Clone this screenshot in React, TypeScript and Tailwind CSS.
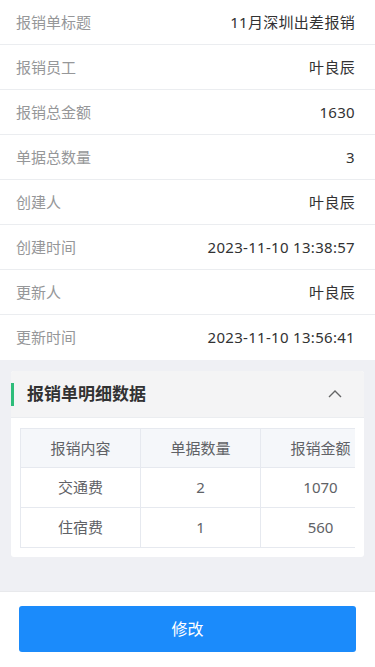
import React from "react";

const rows: [string, string][] = [
  ["报销单标题", "11月深圳出差报销"],
  ["报销员工", "叶良辰"],
  ["报销总金额", "1630"],
  ["单据总数量", "3"],
  ["创建人", "叶良辰"],
  ["创建时间", "2023-11-10 13:38:57"],
  ["更新人", "叶良辰"],
  ["更新时间", "2023-11-10 13:56:41"],
];

const items = [
  ["交通费", "2", "1070"],
  ["住宿费", "1", "560"],
];

export default function App() {
  return (
    <div
      className="w-[375px] h-[667px] flex flex-col bg-[#eff0f4] overflow-hidden"
      style={{ fontFamily: '"Noto Sans", "Noto Sans CJK SC", sans-serif' }}
    >
      <div className="flex-1 overflow-hidden">
        <div className="bg-white">
          {rows.map(([k, v], i) => (
            <div
              key={k}
              className={`h-[45px] flex items-center justify-between pl-4 pr-5 text-[15px] ${
                i < rows.length - 1 ? "border-b border-[#ebedf0]" : ""
              }`}
            >
              <span className="text-[#969799]">{k}</span>
              <span className="text-[#323233] tracking-[0.3px]">{v}</span>
            </div>
          ))}
        </div>
        <div className="mx-[11px] mt-[11px] bg-white rounded-[3px] pb-[9px]">
          <div className="h-[47px] bg-[#f4f4f5] flex items-center justify-between border-b border-[#ebedf0] rounded-t-[3px]">
            <div className="flex items-center">
              <div className="w-[3px] h-[23px] bg-[#2ebd7a]" />
              <span className="ml-[13px] text-[17px] font-bold text-[#323233]">报销单明细数据</span>
            </div>
            <svg className="mr-[22px]" width="14" height="8" viewBox="0 0 14 8" fill="none">
              <path d="M1 7L7 1L13 7" stroke="#646566" strokeWidth="1.4" />
            </svg>
          </div>
          <div className="mx-[9px] mt-[10px] overflow-hidden">
            <table className="border-collapse text-[15px] text-[#606266] table-fixed w-[361px]">
              <thead>
                <tr className="h-[39px] bg-[#f5f7fa]">
                  {["报销内容", "单据数量", "报销金额"].map((h) => (
                    <th key={h} className="w-[120px] font-normal border border-[#e6e9ef] text-center">
                      {h}
                    </th>
                  ))}
                </tr>
              </thead>
              <tbody>
                {items.map((r) => (
                  <tr key={r[0]} className="h-[40px]">
                    {r.map((c, j) => (
                      <td key={j} className="border border-[#e6e9ef] text-center">
                        {c}
                      </td>
                    ))}
                  </tr>
                ))}
              </tbody>
            </table>
          </div>
        </div>
      </div>
      <div className="h-[76px] bg-white border-t border-[#e8e9ec] flex items-start pt-[14px] px-[19px]">
        <button className="w-full h-[46px] bg-[#1b8bfb] rounded-[3px] text-white text-[16px]">修改</button>
      </div>
    </div>
  );
}
